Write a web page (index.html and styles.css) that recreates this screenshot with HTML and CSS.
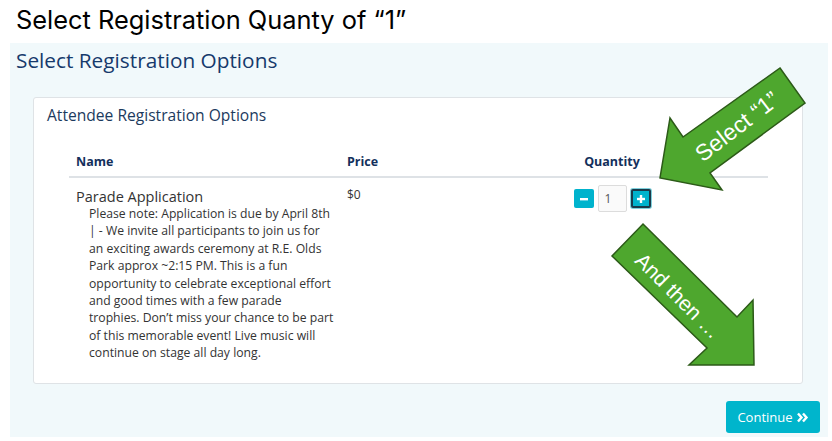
FILE: index.html
```html
<!DOCTYPE html>
<html>
<head>
<meta charset="utf-8">
<link rel="stylesheet" href="styles.css">
</head>
<body>
<h1 class="slide-title">Select Registration Quanty of “1”</h1>
<div class="panel">
  <h2 class="panel-title">Select Registration Options</h2>
  <div class="card">
    <h3 class="card-title">Attendee Registration Options</h3>
    <table class="options">
      <colgroup><col class="w-name"><col class="w-price"><col class="w-qty"></colgroup>
      <thead>
        <tr><th>Name</th><th>Price</th><th class="col-qty">Quantity</th></tr>
      </thead>
      <tbody>
        <tr>
          <td>
            <div class="item-name">Parade Application</div>
            <div class="item-desc">Please note: Application is due by April 8th | - We invite all participants to join us for an exciting awards ceremony at R.E. Olds Park approx ~2:15 PM. This is a fun opportunity to celebrate exceptional effort and good times with a few parade trophies. Don’t miss your chance to be part of this memorable event! Live music will continue on stage all day long.</div>
          </td>
          <td class="price">$0</td>
          <td>
            <div class="qty">
              <button class="qbtn"><svg width="10" height="10" viewBox="0 0 10 10"><rect x="1" y="4" width="8" height="2.4" fill="#fff"/></svg></button>
              <input class="qinput" value="1">
              <button class="qbtn focus"><svg width="10" height="10" viewBox="0 0 10 10"><rect x="1" y="3.8" width="8" height="2.4" fill="#fff"/><rect x="3.8" y="1" width="2.4" height="8" fill="#fff"/></svg></button>
            </div>
          </td>
        </tr>
      </tbody>
    </table>
  </div>
  <div class="actions">
    <button class="continue">Continue <svg width="12" height="11" viewBox="0 0 12 11"><path d="M1 1.5 L4.5 5.5 L1 9.5 M6 1.5 L9.5 5.5 L6 9.5" fill="none" stroke="#fff" stroke-width="2.4" stroke-linejoin="miter"/></svg></button>
  </div>
</div>
<svg class="callouts" width="832" height="441" viewBox="0 0 832 441">
  <polygon points="780,68 805,103 710,173 722,190 660,178 670,118 683,137" fill="#4ea72e" stroke="#2c5a18" stroke-width="1.5"/>
  <text x="0" y="0" transform="translate(738,128) rotate(-37.5)" text-anchor="middle" class="callout-text big">Select “1”</text>
  <polygon points="643,224 737,317 753,300 754,365 689,365 707,348 612,256" fill="#4ea72e" stroke="#2c5a18" stroke-width="1.5"/>
  <text x="0" y="0" transform="translate(677,297) rotate(45)" text-anchor="middle" class="callout-text">And then …</text>
</svg>
</body>
</html>
```

FILE: styles.css
```css
html, body {
  margin: 0;
  padding: 0;
  background: #ffffff;
}
body {
  position: relative;
  width: 832px;
  height: 441px;
  overflow: hidden;
  font-family: "Open Sans", "Noto Sans", sans-serif;
}
.slide-title {
  margin: 0;
  height: 43px;
  padding-left: 16px;
  box-sizing: border-box;
  font-family: Inter, "Noto Sans", sans-serif;
  font-weight: 400;
  font-size: 25.4px;
  line-height: 40px;
  color: #000;
}
.panel {
  margin-left: 10px;
  width: 818px;
  height: 394px;
  background: #f1f9fb;
  box-sizing: border-box;
  padding: 3px 0 0 6px;
  display: flex;
  flex-direction: column;
}
.panel-title {
  margin: 0;
  font-weight: 400;
  font-size: 20.8px;
  line-height: 29px;
  color: #163a6c;
}
.card {
  margin-top: 22px;
  margin-left: 17px;
  width: 770px;
  height: 287px;
  box-sizing: border-box;
  background: #fff;
  border: 1px solid #dfe3e6;
  border-radius: 3px;
  padding: 6px 0 0 13px;
}
.card-title {
  margin: 0;
  font-weight: 400;
  font-size: 15.6px;
  line-height: 22px;
  color: #1c3a5e;
}
.options {
  margin-top: 20px;
  margin-left: 22px;
  width: 699px;
  border-collapse: collapse;
  table-layout: fixed;
}
.w-name { width: 271px; }
.w-price { width: 116px; }
.w-qty { width: 312px; }
.options th {
  text-align: left;
  font-size: 12.5px;
  font-weight: 700;
  color: #13305c;
  padding: 7px 7px 6px;
  border-bottom: 2px solid #dee2e6;
}
.options th.col-qty { text-align: center; }
.options td {
  vertical-align: top;
  padding: 9px 7px 7px;
}
.item-name {
  font-size: 14.5px;
  color: #333;
  line-height: 20px;
}
.item-desc {
  padding-left: 13px;
  font-size: 12.2px;
  line-height: 17.4px;
  color: #333;
  width: 245px;
  margin-top: -2px;
}
.price {
  font-size: 12px;
  color: #333;
  line-height: 16px;
}
.qty {
  display: flex;
  align-items: center;
  justify-content: center;
  gap: 4px;
  margin-top: -2px;
}
.qbtn {
  width: 20px;
  height: 19px;
  padding: 0;
  border: none;
  border-radius: 2px;
  background: #00b3cd;
  display: flex;
  align-items: center;
  justify-content: center;
}
.qbtn.focus {
  border: 2px solid #1b3a4a;
  box-shadow: 0 0 0 1px #7fd0dc;
}
.qinput {
  width: 29px;
  height: 27px;
  box-sizing: border-box;
  border: 1px solid #dcdcdc;
  border-radius: 2px;
  background: #fafafa;
  font-family: "Open Sans", sans-serif;
  font-size: 12px;
  color: #555;
  padding: 0 0 0 6px;
}
.actions {
  display: flex;
  justify-content: flex-end;
  margin-top: 17px;
  padding-right: 8px;
}
.continue {
  width: 94px;
  height: 32px;
  border: none;
  border-radius: 3px;
  background: #00b5cc;
  color: #fff;
  font-family: "Open Sans", sans-serif;
  font-size: 13px;
  display: flex;
  align-items: center;
  justify-content: center;
  gap: 4px;
  padding: 0;
}
.callouts {
  position: absolute;
  left: 0;
  top: 0;
  pointer-events: none;
}
.callout-text {
  font-family: "Liberation Sans", Arial, sans-serif;
  font-size: 21px;
  fill: #ffffff;
  dominant-baseline: middle;
}
.callout-text.big {
  font-size: 23px;
}
```
